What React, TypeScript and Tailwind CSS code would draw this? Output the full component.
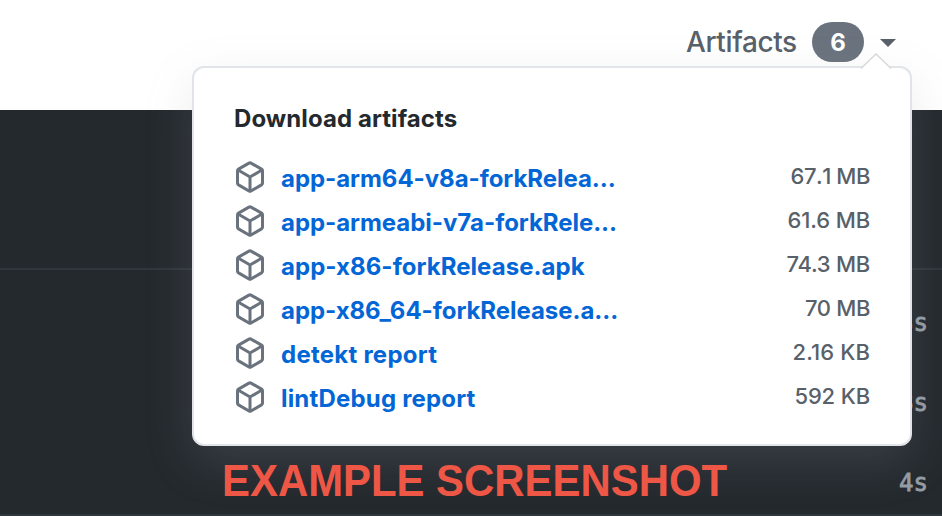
const artifacts = [
  { name: "app-arm64-v8a-forkRelea...", size: "67.1 MB", nameStyle: "tracking-[-0.05px]", sizeStyle: "tracking-[-0.45px] [font-kerning:none]" },
  { name: "app-armeabi-v7a-forkRele...", size: "61.6 MB", nameStyle: "tracking-[-0.05px]", sizeStyle: "tracking-[-0.1px]" },
  { name: "app-x86-forkRelease.apk", size: "74.3 MB", nameStyle: "tracking-[0.05px]", sizeStyle: "tracking-[-0.25px]" },
  { name: "app-x86_64-forkRelease.a...", size: "70 MB", nameStyle: "tracking-[-0.05px]", sizeStyle: "tracking-[-0.35px]" },
  { name: "detekt report", size: "2.16 KB", nameStyle: "tracking-[0.25px]", sizeStyle: "tracking-[0.1px]" },
  { name: "lintDebug report", size: "592 KB", nameStyle: "tracking-[0.18px]", sizeStyle: "tracking-[-0.15px]" },
];

function PackageIcon() {
  return (
    <svg className="size-8 shrink-0 fill-[#6a737d]" viewBox="0 0 16 16">
      <path
        fillRule="evenodd"
        d="M8.878.392a1.75 1.75 0 00-1.756 0l-5.25 3.045A1.75 1.75 0 001 4.951v6.098c0 .624.332 1.2.872 1.514l5.25 3.045a1.75 1.75 0 001.756 0l5.25-3.045c.54-.313.872-.89.872-1.514V4.951c0-.624-.332-1.2-.872-1.514L8.878.392zM7.875 1.69a.25.25 0 01.25 0l4.63 2.685L8 7.133 3.245 4.375l4.63-2.685zM2.5 5.677v5.372c0 .09.047.171.125.216l4.625 2.683V8.432L2.5 5.677zm6.25 8.271l4.625-2.683a.25.25 0 00.125-.216V5.677L8.75 8.432v5.516z"
      />
    </svg>
  );
}

function ArtifactsMenu() {
  return (
    <div className="absolute top-[66px] left-[192px] h-[380px] w-[720px] rounded-xl border-2 border-[#e1e4e8] bg-white px-10 pt-[33px] shadow-[0_16px_48px_rgba(149,157,165,0.2)]">
      <svg className="absolute -top-[15px] right-[18px] h-[17px] w-8" viewBox="0 0 32 17">
        <path d="M0 17L16 1L32 17Z" fill="white" />
        <path d="M1 15.5L16 1L31 15.5" fill="none" stroke="#d9dadc" strokeWidth="1.6" />
      </svg>
      <h2 className="h-9 text-2xl leading-9 font-bold tracking-[0.07px] text-[#24292e]">Download artifacts</h2>
      <ul className="mt-[18px]">
        {artifacts.map((artifact) => (
          <li key={artifact.name} className="flex h-11 items-center">
            <PackageIcon />
            <a className={`ml-[15px] pt-[3px] text-2xl leading-9 font-bold text-[#0366d6] ${artifact.nameStyle}`}>
              {artifact.name}
            </a>
            <span className={`ml-auto pb-0.5 text-[22px] leading-9 font-[450] text-[#586069] ${artifact.sizeStyle}`}>
              {artifact.size}
            </span>
          </li>
        ))}
      </ul>
    </div>
  );
}

export default function App() {
  return (
    <div className="relative h-[516px] w-[942px] overflow-hidden bg-[#24292e] font-['Inter',sans-serif]">
      <header className="flex h-[110px] items-start bg-white pt-[21px] pl-[686px] text-[#586069]">
        <span className="w-[126px] text-[28px] leading-[42px] font-[450] tracking-[-0.4px]">Artifacts</span>
        <span className="mt-px flex h-10 w-[52px] items-center justify-center rounded-full bg-[#6a737d] pt-px text-2xl font-bold text-white">
          6
        </span>
        <svg className="mt-[18px] ml-4 h-2 w-4 fill-[#586069]" viewBox="0 0 16 8">
          <path d="M0 0H16L8 8Z" />
        </svg>
      </header>
      <main className="h-[406px] border-b-2 border-[#2f363d]">
        <div className="h-[160px] border-b-2 border-[#2f363d]" />
        <div className="flex flex-col items-end pt-[33px] pr-3.5 font-['DejaVu_Sans_Mono',monospace] text-2xl text-[#959da5] [-webkit-text-stroke:0.8px_#959da5]">
          <span className="h-20 leading-10">3s</span>
          <span className="h-20 leading-10">8s</span>
          <span className="h-10 leading-10">4s</span>
        </div>
      </main>
      <ArtifactsMenu />
      <div className="absolute top-[457px] left-[222px] origin-left scale-x-[0.952] font-['Liberation_Sans',Arial,sans-serif] text-[44px] leading-[48px] font-bold whitespace-nowrap text-[#ee5746]">
        EXAMPLE SCREENSHOT
      </div>
    </div>
  );
}
